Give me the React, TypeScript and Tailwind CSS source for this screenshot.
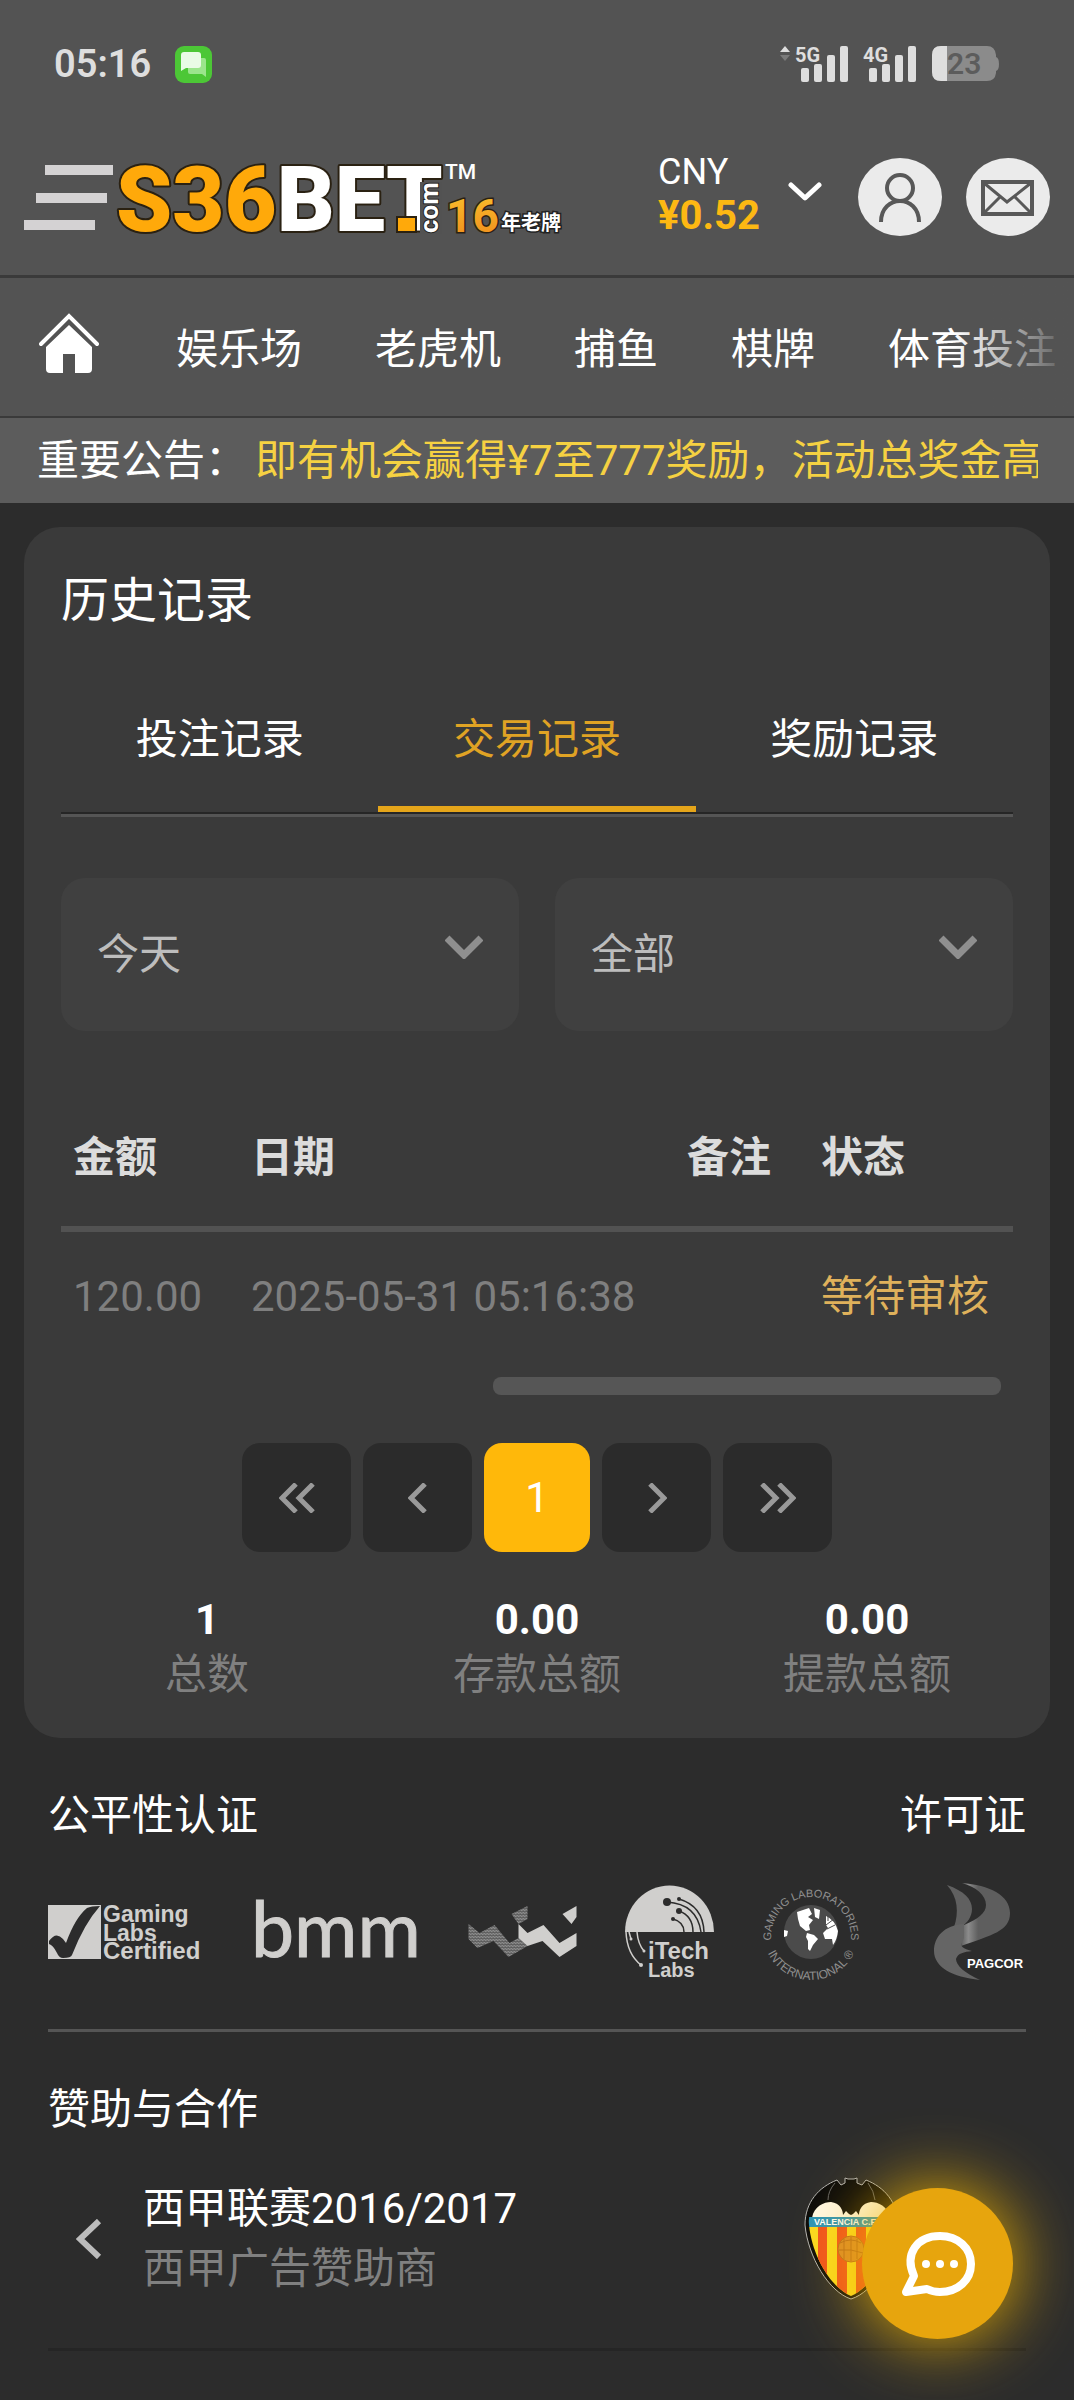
import React, { useState } from 'react';

const navItems = ['娱乐场', '老虎机', '捕鱼', '棋牌', '体育投注'];
const tabs = ['投注记录', '交易记录', '奖励记录'];

const records = [
    { amount: '120.00', date: '2025-05-31 05:16:38', remark: '', status: '等待审核' },
];

const totals = [
    { label: '总数', value: '1' },
    { label: '存款总额', value: '0.00' },
    { label: '提款总额', value: '0.00' },
];

const Signal: React.FC<{ label: string; arrows?: boolean }> = ({ label, arrows }) => (
    <svg viewBox="0 0 68 38" className="w-[68px] h-[38px] overflow-visible" fill="#dedede">
        {arrows && <path d="M0 7 L5 1 L10 7Z" />}
        {arrows && <path d="M0 10 L5 16 L10 10Z" fill="#7a7a7a" />}
        <text x="15" y="17" fontSize="20" fontWeight="700">{label}</text>
        <rect x="21" y="23" width="8" height="14" rx="2" />
        <rect x="34" y="19" width="8" height="18" rx="2" />
        <rect x="47" y="10" width="8" height="27" rx="2" />
        <rect x="60" y="1" width="8" height="36" rx="2" />
    </svg>
);

const StatusBar = () => (
    <div className="flex items-center h-[120px] pt-2 pl-[54px] pr-[74px] text-[#dedede]">
        <span className="text-[38px] leading-[44px] font-semibold">05:16</span>
        <svg viewBox="0 0 37 37" className="w-[37px] h-[37px] ml-6">
            <rect width="37" height="37" rx="9" fill="#4cc736" />
            <path d="M15 12 H29 Q31 12 31 14 V31 L27 28 H15 Q13 28 13 26 V14Z" fill="#9be58c" />
            <path d="M9 6 H23 Q26 6 26 9 V19 Q26 22 23 22 H11 L6 25 V9 Q6 6 9 6Z" fill="#e9fbe6" />
        </svg>
        <div className="flex items-center ml-auto">
            <Signal label="5G" arrows />
            <Signal label="4G" />
            <svg viewBox="0 0 68 36" className="w-[68px] h-9 ml-4 overflow-visible">
                <path d="M9 0 H55 Q63 0 64 9 V11 Q67 12 67 18 Q67 24 64 25 V27 Q63 35 55 35 H9 Q0 35 0 26 V9 Q0 0 9 0Z" fill="#8b8b8b" />
                <path d="M15 0 H9 Q0 0 0 9 V26 Q0 35 9 35 H15Z" fill="#dedede" />
                <text x="15" y="28" fontSize="30" fontWeight="600" fill="#5c5c5c">23</text>
            </svg>
        </div>
    </div>
);

const Logo = () => (
    <svg viewBox="0 0 448 72" className="w-[448px] h-[72px] shrink-0 overflow-visible" role="img" aria-label="S36BET.com">
        <defs>
            <linearGradient id="sixteen" x1="0" x2="0" y1="0" y2="1">
                <stop offset="0" stopColor="#f9c22d" />
                <stop offset="1" stopColor="#f08a1c" />
            </linearGradient>
        </defs>
        <text x="0" y="69" fontSize="90" fontWeight="900" stroke="#2a2112" strokeWidth="4" strokeLinejoin="round" paintOrder="stroke">
            <tspan fill="#ffa90a">S36</tspan>
            <tspan fill="#fff">BET</tspan>
        </text>
        <rect x="281" y="55" width="19" height="15" fill="#ffa90a" stroke="#2a2112" strokeWidth="2" />
        <rect x="304" y="20" width="22" height="52" fill="#525252" />
        <text transform="translate(322 71) rotate(-90)" fontSize="26" fontWeight="700" fill="#fff" stroke="#222" strokeWidth="2" paintOrder="stroke">com</text>
        <text x="329" y="17" fontSize="21" fontWeight="500" fill="#fff">TM</text>
        <text x="330" y="70" fontSize="46" fontWeight="700" fill="url(#sixteen)" stroke="#2a2112" strokeWidth="3" paintOrder="stroke">16</text>
        <text x="385" y="68" fontSize="20" fontWeight="700" fill="#fff" stroke="#222" strokeWidth="3" paintOrder="stroke">年老牌</text>
    </svg>
);

const Header = () => (
    <header className="flex items-center h-[158px] px-6 border-b-3 border-[#3a3a3a]">
        <button aria-label="菜单" className="shrink-0 mr-[3px]">
            <svg viewBox="0 0 89 65" className="w-[89px] h-[65px]" fill="#d4d2d3">
                <rect x="21" y="0" width="68" height="10" />
                <rect x="12" y="28" width="71" height="10" />
                <rect x="0" y="55" width="71" height="10" />
            </svg>
        </button>
        <Logo />
        <button className="flex items-center gap-7 ml-auto mr-9 pb-2 text-left">
            <span className="flex flex-col">
                <span className="text-4xl leading-[44px] text-white">CNY</span>
                <span className="text-[40px] leading-[44px] font-bold text-[#fdb813]">¥0.52</span>
            </span>
            <svg viewBox="0 0 34 20" className="w-[34px] h-5 mb-1" fill="none" stroke="#fff" strokeWidth="5" strokeLinecap="round" strokeLinejoin="round">
                <path d="M3 3 L17 16 L31 3" />
            </svg>
        </button>
        <button aria-label="账户" className="shrink-0 mr-6">
            <svg viewBox="0 0 84 79" className="w-[84px] h-[79px]" fill="none" stroke="#585858" strokeWidth="4">
                <ellipse cx="42" cy="39" rx="42" ry="39" fill="#ebebeb" stroke="none" />
                <circle cx="42" cy="30" r="13" />
                <path d="M23 64 C23 36 61 36 61 64" />
            </svg>
        </button>
        <button aria-label="消息" className="shrink-0">
            <svg viewBox="0 0 84 79" className="w-[84px] h-[79px]" fill="none" stroke="#585858" strokeWidth="4">
                <ellipse cx="42" cy="39" rx="42" ry="39" fill="#ebebeb" stroke="none" />
                <rect x="17" y="24" width="49" height="32" />
                <path d="M18 25 L41 44 L65 25 M18 55 L34 39 M65 55 L49 39" strokeWidth="3" />
            </svg>
        </button>
    </header>
);

const Nav = () => (
    <nav className="relative flex items-center h-[140px] pl-[39px] border-b-2 border-[#3a3a3a] overflow-hidden">
        <a href="#home" aria-label="首页" className="shrink-0 mr-[77px] pb-2">
            <svg viewBox="0 0 60 60" className="w-[60px] h-[60px]">
                <path d="M2 31 L30 3 L58 31" fill="none" stroke="#fff" strokeWidth="4" strokeLinecap="round" />
                <path d="M30 12 L53 34 V56 Q53 60 49 60 H36 V41 H24 V60 H11 Q7 60 7 56 V34Z" fill="#fff" />
            </svg>
        </a>
        <div className="flex gap-[73px] pt-[6px]">
            {navItems.map((item) => (
                <a key={item} href="#nav" className="text-[42px] leading-[60px] text-white whitespace-nowrap">{item}</a>
            ))}
        </div>
        <div className="absolute inset-y-0 right-0 w-[120px] bg-linear-to-r from-transparent to-[#535353]" />
    </nav>
);

const Chevron: React.FC<{ d: string; className: string; viewBox: string; width?: number }> =
    ({ d, className, viewBox, width = 5 }) => (
        <svg viewBox={viewBox} className={className} fill="none" stroke="currentColor" strokeWidth={width}>
            <path d={d} />
        </svg>
    );

const Filter: React.FC<{ label: string; options: string[] }> = ({ label, options }) => (
    <div className="relative flex-1">
        <select
            aria-label={label}
            className="w-full h-[153px] pl-9 pr-20 rounded-3xl bg-[#404040] text-[42px] leading-[60px] text-[#bdbdbd] appearance-none"
        >
            {options.map((option) => (
                <option key={option}>{option}</option>
            ))}
        </select>
        <Chevron
            viewBox="0 0 38 24"
            d="M2 3 L19 20 L36 3"
            width={7}
            className="absolute right-9 top-[57px] w-[38px] h-6 text-[#8f8f8f] pointer-events-none"
        />
    </div>
);

const pageButton = 'flex items-center justify-center w-[109px] h-[109px] rounded-[18px] bg-[#2b2b2b] text-[#9a9a9a]';

const Pagination = () => (
    <div className="flex justify-center gap-3 mt-12">
        <button aria-label="首页" className={pageButton}>
            <Chevron viewBox="0 0 36 30" d="M17 1 L3 15 L17 29 M34 1 L20 15 L34 29" className="w-9 h-[30px]" />
        </button>
        <button aria-label="上一页" className={pageButton}>
            <Chevron viewBox="0 0 20 30" d="M17 1 L3 15 L17 29" className="w-5 h-[30px]" />
        </button>
        <button className="flex items-center justify-center w-[106px] h-[109px] rounded-[18px] bg-[#ffb80a] text-[42px] text-white">1</button>
        <button aria-label="下一页" className={pageButton}>
            <Chevron viewBox="0 0 20 30" d="M3 1 L17 15 L3 29" className="w-5 h-[30px]" />
        </button>
        <button aria-label="末页" className={pageButton}>
            <Chevron viewBox="0 0 36 30" d="M2 1 L16 15 L2 29 M19 1 L33 15 L19 29" className="w-9 h-[30px]" />
        </button>
    </div>
);

const History = () => {
    const [active, setActive] = useState('交易记录');

    return (
        <section className="mx-6 mt-6 pt-[38px] pb-9 rounded-[36px] bg-[#3a3a3a]">
            <div className="px-[37px]">
                <h1 className="text-5xl leading-[72px] text-white">历史记录</h1>

                {/* Tabs */}
                <div role="tablist" className="flex mt-8 border-b-3 border-[#555]">
                    {tabs.map((tab) => (
                        <button
                            key={tab}
                            role="tab"
                            aria-selected={tab === active}
                            onClick={() => setActive(tab)}
                            className="flex-1 border-b-2 border-[#262626]"
                        >
                            <span
                                className={`block pt-[41px] pb-9 border-b-6 text-[42px] leading-[60px] ${
                                    tab === active ? 'border-[#e5a51a] text-[#e0a324]' : 'border-transparent text-white'
                                }`}
                            >
                                {tab}
                            </span>
                        </button>
                    ))}
                </div>

                {/* Filters */}
                <div className="flex gap-9 mt-[61px]">
                    <Filter label="日期" options={['今天', '昨天']} />
                    <Filter label="类型" options={['全部', '存款', '提款']} />
                </div>

                {/* Records */}
                <table className="w-full mt-[58px] table-fixed text-left text-[42px] leading-[60px]">
                    <thead>
                        <tr className="h-[140px] border-b-6 border-[#525252] text-[#dcdcdc]">
                            <th className="w-[178px] px-3 font-bold">金额</th>
                            <th className="w-[436px] px-3 font-bold">日期</th>
                            <th className="w-[134px] px-3 font-bold">备注</th>
                            <th className="px-3 font-bold">状态</th>
                        </tr>
                    </thead>
                    <tbody>
                        {records.map((record) => (
                            <tr key={record.date} className="h-[132px] text-[#7f7f7f] whitespace-nowrap">
                                <td className="px-3">{record.amount}</td>
                                <td className="px-3">{record.date}</td>
                                <td className="px-3">{record.remark}</td>
                                <td className="px-3 text-[#dfb15b]">{record.status}</td>
                            </tr>
                        ))}
                    </tbody>
                </table>
                <div className="flex justify-end mt-4 pr-3">
                    <div className="w-[54%] h-[18px] rounded-lg bg-[#565656]" />
                </div>

                <Pagination />
            </div>

            {/* Totals */}
            <div className="grid grid-cols-3 px-[18px] mt-10 text-center text-[42px] leading-[55px]">
                {totals.map((total) => (
                    <div key={total.label}>
                        <p className="font-bold text-white">{total.value}</p>
                        <p className="text-[#808080]">{total.label}</p>
                    </div>
                ))}
            </div>
        </section>
    );
};

const GamingLabs = () => (
    <svg viewBox="0 0 161 56" className="w-[161px] h-14 overflow-visible" fill="#d0cfcd" fontFamily="Liberation Sans" fontWeight="700">
        <rect y="1" width="53" height="54" />
        <path d="M1 37 Q8 27 15 35 L18 39 Q27 14 39 4 Q43 2 52 2 Q36 20 24 51 Q23 54 15 54 Q11 54 9 49 Q5 41 1 40Z" fill="#2c2c2c" />
        <text x="55" y="18" fontSize="23">Gaming</text>
        <text x="55" y="37" fontSize="23">Labs</text>
        <text x="55" y="55" fontSize="24">Certified</text>
    </svg>
);

const Bmm = () => (
    <svg viewBox="0 0 163 56" className="w-[163px] h-14 overflow-visible">
        <text x="-6" y="53" fontSize="77" fontFamily="Lato" fill="#d0cfcd" stroke="#d0cfcd" strokeWidth="1">bmm</text>
    </svg>
);

const Wave = () => (
    <svg viewBox="0 0 108 52" className="w-[109px] h-[52px]">
        <defs>
            <pattern id="hatch" width="3" height="3" patternUnits="userSpaceOnUse">
                <rect width="3" height="3" fill="#5c5c5c" />
                <path d="M0 0 L3 2" stroke="#a4a4a4" strokeWidth="1" />
            </pattern>
        </defs>
        <path d="M0 18 L11 27 L26 19 L41 37 L50 32 L59 40 L40 51 L25 35 L9 42 L0 33Z M43 8 L59 0 V13 L50 18Z" fill="url(#hatch)" />
        <path d="M50 18 L59 27 L75 19 L91 37 L108 27 V40 L91 51 L74 35 L59 40 L50 32Z M94 8 L108 0 V11 L103 18Z" fill="#d0cfcd" />
    </svg>
);

const ITech = () => (
    <svg viewBox="0 0 89 92" className="w-[89px] h-[92px] overflow-visible" fill="none" stroke="#2c2c2c" strokeWidth="1.5">
        <path d="M0 46 A44 46 0 0 1 89 46Z" fill="#d0cfcd" stroke="none" />
        <path d="M42 16 Q72 18 76 46 M54 13 Q78 20 79 46 M54 25 Q68 30 68 46 M48 33 Q59 36 59 46" />
        <g fill="#2c2c2c" stroke="none">
            <circle cx="42" cy="16" r="4" />
            <circle cx="54" cy="13" r="2" />
            <circle cx="54" cy="25" r="3" />
            <circle cx="48" cy="33" r="2" />
        </g>
        <path d="M1 46 Q2 68 16 79 M4 46 L6 53 M12 46 Q13 58 19 65" stroke="#d0cfcd" />
        <g fill="#d0cfcd" stroke="none">
            <circle cx="16" cy="79" r="2" />
            <circle cx="6" cy="53" r="1.5" />
            <circle cx="19" cy="65" r="1.5" />
            <g fontFamily="Liberation Sans" fontWeight="700">
                <text x="23" y="73" fontSize="24">iTech</text>
                <text x="23" y="91" fontSize="20">Labs</text>
            </g>
        </g>
    </svg>
);

const GliGlobe = () => (
    <svg viewBox="0 0 98 98" className="w-[98px] h-[98px] overflow-visible">
        <defs>
            <path id="ring-top" d="M9 54 A40 40 0 1 1 89 54" />
            <path id="ring-bottom" d="M1 49 A48 48 0 0 0 97 49" />
        </defs>
        <circle cx="49" cy="49" r="27" fill="#4b4b4b" />
        <path d="M35 29 L47 25 L50 31 L46 34 L51 37 L47 42 L48 47 L44 48 L38 43 L36 36Z M45 50 L52 52 L56 56 L51 62 L48 68 L46 66 L46 58 L44 54Z M64 33 Q73 37 76 48 Q75 57 71 62 L70 56 L63 56 L61 50 L66 45 L64 42Z M52 25 L58 27 L57 36 L53 34Z M22 47 L26 48 L25 53 L22 54Z" fill="#fff" />
        <path d="M64 42 L72 36 M65 46 L73 42 M66 32 V38" stroke="#4b4b4b" strokeWidth="1" />
        <g fontFamily="Liberation Sans" fill="#909090" textAnchor="middle">
            <text fontSize="11"><textPath href="#ring-top" startOffset="50%">GAMING LABORATORIES</textPath></text>
            <text fontSize="12"><textPath href="#ring-bottom" startOffset="50%">INTERNATIONAL ®</textPath></text>
        </g>
    </svg>
);

const Pagcor = () => (
    <svg viewBox="0 0 92 98" className="w-[92px] h-[98px] ml-auto overflow-visible">
        <defs>
            <linearGradient id="ribbon" x1="0" x2="1" y1="0" y2="0">
                <stop offset="0" stopColor="#5e5e5e" />
                <stop offset="0.15" stopColor="#8c8c8c" />
                <stop offset="0.35" stopColor="#5e5e5e" />
            </linearGradient>
        </defs>
        <path d="M13 2 C30 8 38 16 38 26 C38 34 33 40 28 43 L20 44 C25 30 24 14 13 2Z" fill="#606060" />
        <path d="M28 0 C55 2 76 12 76 30 C76 48 58 52 27 63 C28 56 28 50 30 42 C44 36 52 30 52 22 C52 12 42 4 28 0Z" fill="url(#ribbon)" />
        <path d="M30 41 C10 42 0 54 0 68 C0 84 18 94 46 97 C30 90 22 82 22 76 C24 70 30 69 38 68 C30 66 28 64 27 62 L30 55Z" fill="#656565" />
        <text x="33" y="85" fontSize="13" fontFamily="Liberation Sans" fontWeight="700" fill="#fff">PAGCOR</text>
    </svg>
);

const ClubBadge = () => (
    <svg viewBox="0 0 96 123" className="w-24 h-[123px] shrink-0 overflow-visible">
        <defs>
            <clipPath id="shield">
                <path d="M8 28 H88 Q92 38 90 48 C87 78 68 110 47 119 C26 110 8 78 5 48 Q4 38 8 28Z" />
            </clipPath>
        </defs>
        <path
            d="M47 122 C25 115 4 80 1 48 C1 25 15 10 33 3 L37 8 L41 6 V1 L44 2 H50 L53 1 V6 L58 8 L62 3 C80 10 94 25 94 48 C91 80 70 115 47 122Z"
            fill="#0a0a0a"
            stroke="#b5b5b5"
        />
        <path d="M8 41 C10 29 20 25 27 25 C36 26 39 33 39 38 L42 34 L45 37 L47 38 L49 37 L52 34 L55 38 C55 33 58 26 67 25 C74 25 84 29 86 41Z" fill="#fff8e4" />
        <path d="M31 6 Q24 14 24 23 M64 6 Q70 14 71 23" fill="none" stroke="#666" />
        <g clipPath="url(#shield)">
            <rect y="50" width="96" height="73" fill="#fbd921" />
            <rect x="14" y="50" width="9" height="73" fill="#f0521f" />
            <rect x="33" y="50" width="10" height="73" fill="#f0521f" />
            <rect x="52" y="50" width="10" height="73" fill="#f0521f" />
            <rect x="71" y="50" width="9" height="73" fill="#f0521f" />
            <rect y="40" width="96" height="10" fill="#2b94b8" />
        </g>
        <text x="10" y="48" fontSize="9" fontFamily="Liberation Sans" fontWeight="700" fill="#fff">VALENCIA C.F</text>
        <circle cx="47" cy="72" r="13" fill="#dc8a2b" stroke="#b8691d" />
        <path d="M36 66 Q47 60 57 66 M35 73 H47 V84 M47 60 V73 L59 76 M40 62 V82 M53 62 V82" fill="none" stroke="#b8691d" />
    </svg>
);

const Footer = () => (
    <footer className="px-12 mt-12">
        <div className="flex justify-between text-[42px] leading-[60px] text-white">
            <h2>公平性认证</h2>
            <h2>许可证</h2>
        </div>
        <div className="flex items-center gap-12 mt-[37px]">
            <GamingLabs />
            <Bmm />
            <Wave />
            <ITech />
            <GliGlobe />
            <Pagcor />
        </div>
        <hr className="mt-12 border-t-3 border-[#555]" />

        {/* Sponsors */}
        <h2 className="mt-12 text-[42px] leading-[60px] text-white">赞助与合作</h2>
        <div className="flex items-center mt-[37px] pl-7 pr-[126px]">
            <button aria-label="上一个" className="mr-[41px] text-[#bcbcbc]">
                <Chevron viewBox="0 0 26 40" d="M23 2 L4 20 L23 38" width={6} className="w-[26px] h-10" />
            </button>
            <div className="text-[42px] leading-[60px]">
                <p className="text-white">西甲联赛2016/2017</p>
                <p className="text-[#808080]">西甲广告赞助商</p>
            </div>
            <div className="ml-auto">
                <ClubBadge />
            </div>
        </div>
        <hr className="mt-12 border-t-3 border-[#252525]" />
    </footer>
);

const ChatButton = () => (
    <button
        aria-label="在线客服"
        className="fixed right-[61px] bottom-[61px] w-[151px] h-[151px] rounded-full bg-[#e7a50d] shadow-[0_0_70px_#f0b400]"
    >
        <svg viewBox="0 0 151 151" className="w-full h-full">
            <path
                d="M44 104 L52 88 C42 66 55 48 78 48 C96 48 109 60 109 76 C109 92 96 104 78 104 Q71 104 65 101Z"
                fill="none"
                stroke="#fff"
                strokeWidth="8"
                strokeLinejoin="round"
            />
            <g fill="#fff">
                <circle cx="64" cy="76" r="4" />
                <circle cx="78" cy="76" r="4" />
                <circle cx="92" cy="76" r="4" />
            </g>
        </svg>
    </button>
);

const App = () => {
    return (
        <div className="min-h-screen pb-12 bg-[#2c2c2c] font-['Roboto','Noto_Sans_CJK_SC',sans-serif]">
            <div className="bg-[#535353]">
                <StatusBar />
                <Header />
                <Nav />
            </div>
            <div className="flex h-[85px] pl-[37px] pr-9 items-center bg-[#5c5c5c] text-[42px] leading-[60px] whitespace-nowrap">
                <span className="shrink-0 mr-2 text-white">重要公告：</span>
                <p className="overflow-hidden text-[#f5d142]">即有机会赢得¥7至777奖励，活动总奖金高</p>
            </div>
            <main>
                <History />
            </main>
            <Footer />
            <ChatButton />
        </div>
    );
};

export default App;
